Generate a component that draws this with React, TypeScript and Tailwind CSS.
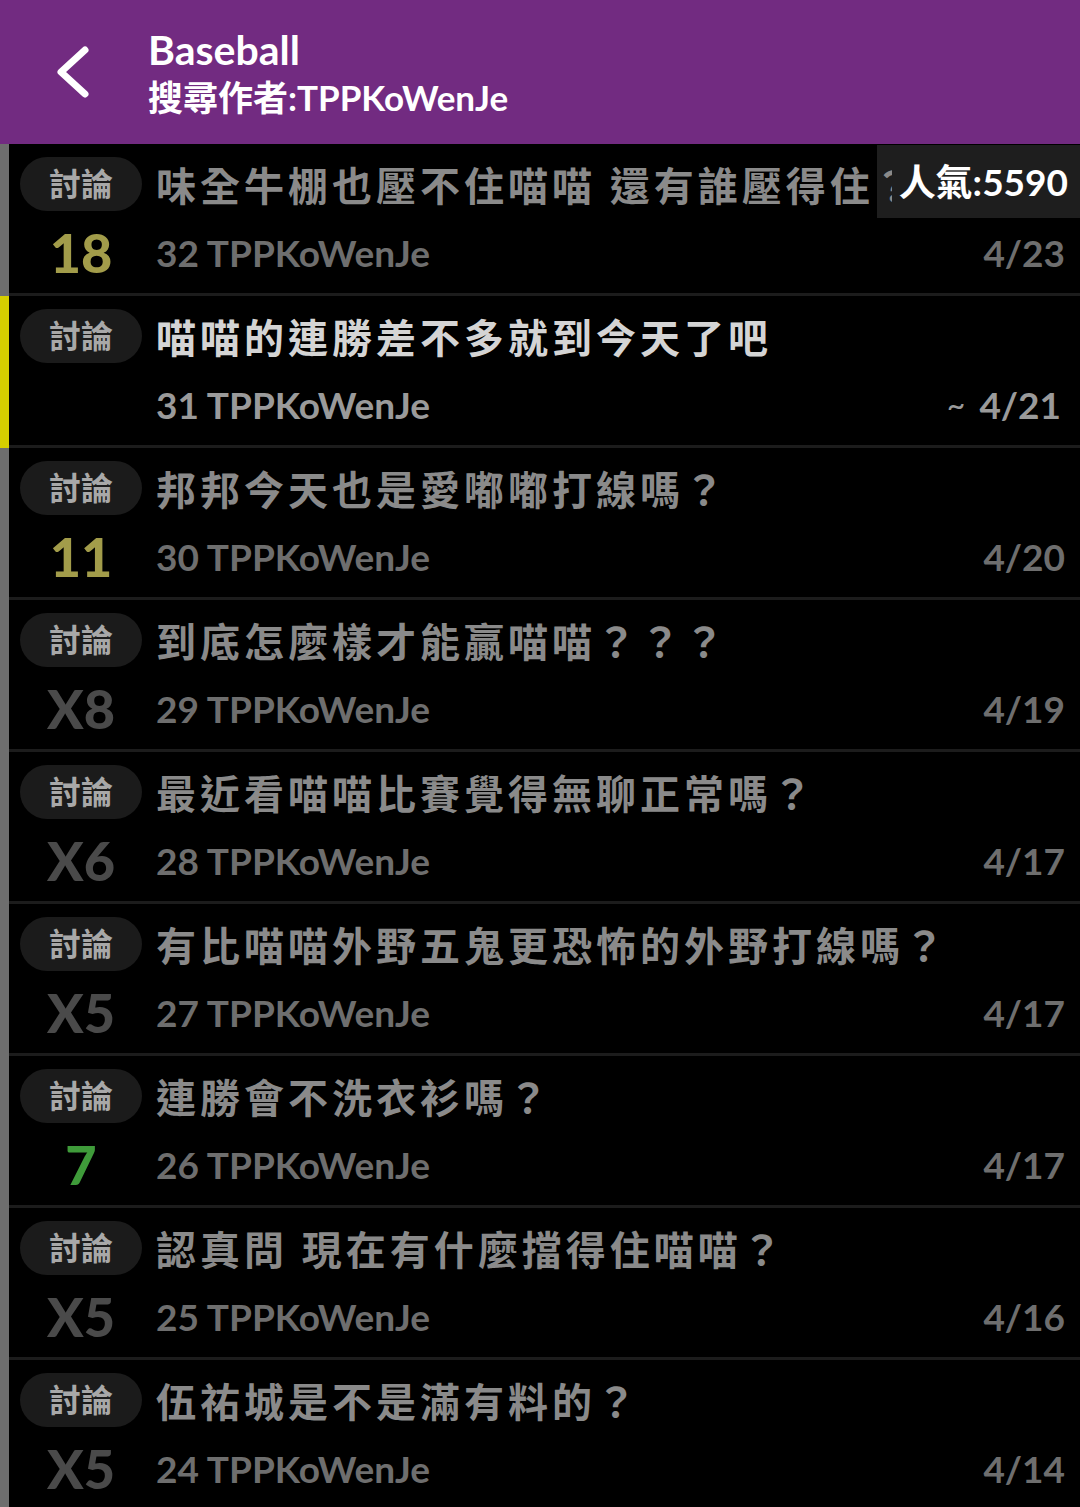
import React from "react";

type Row = {
  title: string;
  num?: string;
  numColor?: string;
  idx: string;
  date: string;
  active?: boolean;
};

const rows: Row[] = [
  { title: "味全牛棚也壓不住喵喵 還有誰壓得住？", num: "18", numColor: "text-[#a29c4a]", idx: "32", date: "4/23" },
  { title: "喵喵的連勝差不多就到今天了吧", idx: "31", date: "4/21", active: true },
  { title: "邦邦今天也是愛嘟嘟打線嗎？", num: "11", numColor: "text-[#a29c4a]", idx: "30", date: "4/20" },
  { title: "到底怎麼樣才能贏喵喵？？？", num: "X8", numColor: "text-[#4a4a4a]", idx: "29", date: "4/19" },
  { title: "最近看喵喵比賽覺得無聊正常嗎？", num: "X6", numColor: "text-[#4a4a4a]", idx: "28", date: "4/17" },
  { title: "有比喵喵外野五鬼更恐怖的外野打線嗎？", num: "X5", numColor: "text-[#4a4a4a]", idx: "27", date: "4/17" },
  { title: "連勝會不洗衣衫嗎？", num: "7", numColor: "text-[#3f9b3a]", idx: "26", date: "4/17" },
  { title: "認真問 現在有什麼擋得住喵喵？", num: "X5", numColor: "text-[#4a4a4a]", idx: "25", date: "4/16" },
  { title: "伍祐城是不是滿有料的？", num: "X5", numColor: "text-[#4a4a4a]", idx: "24", date: "4/14" },
];

const FONT = { fontFamily: 'Lato, "Noto Sans CJK TC", sans-serif' };

function ListRow({ r, first }: { r: Row; first: boolean }) {
  return (
    <div className="flex">
      <div className={`w-[9px] shrink-0 ${r.active ? "bg-[#d6ce00]" : "bg-[#6e6e6e]"}`} />
      <div className="min-w-0 flex-1 border-b-[3px] border-[#1c1c1c] pt-[13px] pb-[7px] pr-[15px] pl-[11px]">
        <div className="flex h-[54px] items-center">
          <div className="flex h-[54px] w-[122px] shrink-0 items-center justify-center rounded-full bg-[#1b1b1b] text-[32px] font-bold text-[#a8a8a8]">
            討論
          </div>
          <div
            className={`relative z-10 ml-[14px] overflow-hidden whitespace-nowrap pt-[4px] text-[40px] font-bold tracking-[4px] ${
              first ? "max-w-[736px]" : ""
            } ${r.active ? "text-[#d4d4d4]" : "text-[#8a8a8a]"}`}
          >
            {r.title}
          </div>
        </div>
        <div className="mt-[9px] flex h-[66px] items-center">
          <div className={`flex w-[122px] shrink-0 justify-center text-[54px] font-black leading-none ${r.numColor ?? ""}`}>
            {r.num ?? ""}
          </div>
          <div className={`ml-[14px] text-[37px] font-bold ${r.active ? "text-[#9a9a9a]" : "text-[#6e6e6e]"}`}>
            {r.idx} TPPKoWenJe
          </div>
          <div className={`ml-auto flex items-center text-[37px] font-bold ${r.active ? "text-[#9a9a9a] mr-[4px]" : "text-[#6e6e6e]"}`}>
            {r.active && <span className="mr-[14px] text-[32px] font-normal">~</span>}
            {r.date}
          </div>
        </div>
      </div>
    </div>
  );
}

export default function App() {
  return (
    <div className="relative h-[1507px] w-[1080px] overflow-hidden bg-black" style={FONT}>
      <div className="flex h-[144px] items-center bg-[#722b81]">
        <div className="flex w-[148px] shrink-0 items-center justify-center">
          <svg width="44" height="56" viewBox="0 0 44 56" className="ml-[2px]">
            <path d="M32 6 L8 28 L32 50" fill="none" stroke="#ffffff" strokeWidth="7" strokeLinecap="round" strokeLinejoin="round" />
          </svg>
        </div>
        <div className="flex flex-col text-white">
          <div className="text-[41px] font-bold leading-[48px]">Baseball</div>
          <div className="mt-[2px] text-[35px] font-bold leading-[42px]">搜尋作者:TPPKoWenJe</div>
        </div>
      </div>
      <div className="relative">
        {rows.map((r, i) => (
          <ListRow key={i} r={r} first={i === 0} />
        ))}
        <div className="absolute right-0 top-[1px] flex h-[73px] w-[203px] items-center justify-end bg-[#1e1e1e] pr-[12px] text-[37px] font-bold text-white">
          人氣:5590
        </div>
      </div>
    </div>
  );
}
